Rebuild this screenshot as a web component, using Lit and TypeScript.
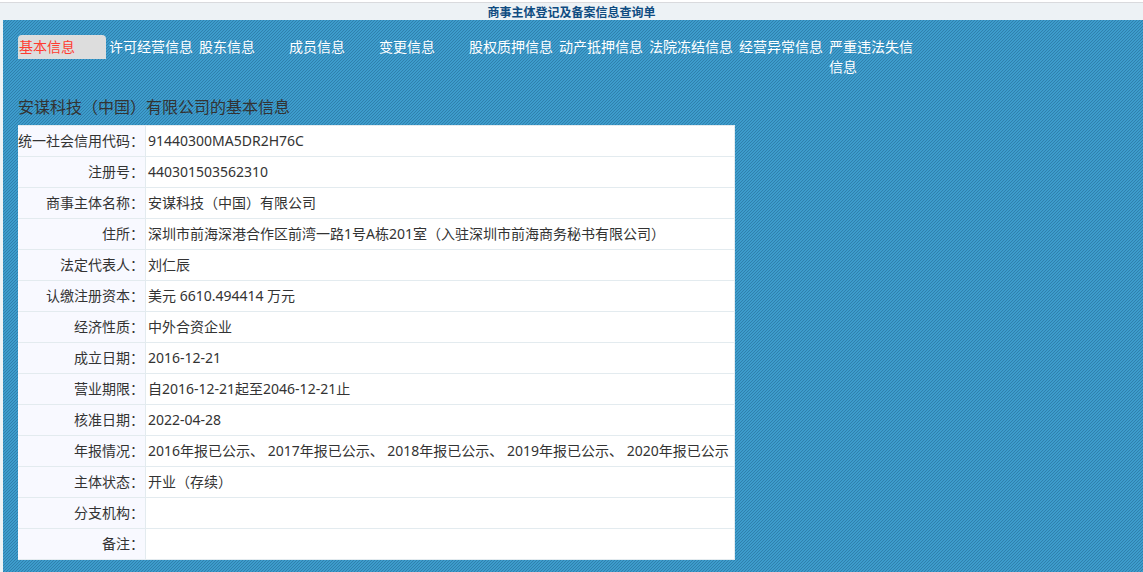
import { LitElement, html, css } from "lit";
import { customElement, property, state } from "lit/decorators.js";

const TABS = [
  "基本信息",
  "许可经营信息",
  "股东信息",
  "成员信息",
  "变更信息",
  "股权质押信息",
  "动产抵押信息",
  "法院冻结信息",
  "经营异常信息",
  "严重违法失信信息",
];

const ROWS: [string, string][] = [
  ["统一社会信用代码", "91440300MA5DR2H76C"],
  ["注册号", "440301503562310"],
  ["商事主体名称", "安谋科技（中国）有限公司"],
  ["住所", "深圳市前海深港合作区前湾一路1号A栋201室（入驻深圳市前海商务秘书有限公司）"],
  ["法定代表人", "刘仁辰"],
  ["认缴注册资本", "美元 6610.494414 万元"],
  ["经济性质", "中外合资企业"],
  ["成立日期", "2016-12-21"],
  ["营业期限", "自2016-12-21起至2046-12-21止"],
  ["核准日期", "2022-04-28"],
  ["年报情况", "2016年报已公示、 2017年报已公示、 2018年报已公示、 2019年报已公示、 2020年报已公示"],
  ["主体状态", "开业（存续）"],
  ["分支机构", ""],
  ["备注", ""],
];

@customElement("info-table")
export class InfoTable extends LitElement {
  @property({ attribute: false }) rows: [string, string][] = [];

  static styles = css`
    :host {
      display: block;
    }
    .table {
      width: 717px;
      border-collapse: separate;
      border-spacing: 0;
      border-top: 1px solid #e3ebef;
      background: #fff;
      color: #333;
      font-size: 14px;
      line-height: 30px;
    }
    .label,
    .value {
      padding: 0;
      border: solid #e3ebef;
      border-width: 0 1px 1px 0;
      height: 30px;
      font-weight: 400;
      white-space: nowrap;
    }
    .label {
      width: 126px;
      padding-right: 1px;
      text-align: right;
      background: #f8f9ff;
    }
    .value {
      padding-left: 2px;
      text-align: left;
    }
  `;

  render() {
    return html`
      <table class="table">
        <tbody>
          ${this.rows.map(
            ([label, value]) => html`<tr>
              <th class="label" scope="row">${label}：</th>
              <td class="value">${value}</td>
            </tr>`
          )}
        </tbody>
      </table>
    `;
  }
}

@customElement("app-root")
export class AppRoot extends LitElement {
  @state() private active = 0;

  static styles = css`
    :host {
      display: flex;
      flex-direction: column;
      min-height: 100vh;
      box-sizing: border-box;
      padding: 2px 0 0 3px;
      background: linear-gradient(#fff 2px, #edf2f5 2px);
      font-family: "Noto Sans", "Noto Sans CJK SC", sans-serif;
    }
    .header {
      margin-left: -3px;
      border-top: 1px solid #d9dadd;
      background: #edf2f5;
    }
    .title {
      margin: 0;
      padding-top: 3px;
      font-size: 12px;
      line-height: 14px;
      font-weight: 700;
      text-align: center;
      color: #0f4c81;
    }
    .main {
      flex: 1;
      padding: 15px 15px 12px;
      background: #3d9ccc
        url("data:image/svg+xml,%3Csvg xmlns='http://www.w3.org/2000/svg' width='3' height='3' shape-rendering='crispEdges'%3E%3Cpath fill='%232f80ad' d='M2 0h1v1H2zM1 1h1v1H1zM0 2h1v1H0z'/%3E%3C/svg%3E");
    }
    .tabs {
      display: flex;
      flex-wrap: wrap;
      align-items: flex-start;
      gap: 2px;
    }
    .tab {
      width: 88px;
      box-sizing: border-box;
      padding: 2px 1px;
      border: 0;
      border-radius: 4px 4px 0 0;
      background: none;
      color: #fff;
      font: inherit;
      font-size: 14px;
      line-height: 20px;
      text-align: left;
      cursor: pointer;
    }
    .tab[aria-selected="true"] {
      background: #ddd;
      color: #ff3b30;
    }
    .heading {
      margin: 18px 0 8px;
      font-size: 16px;
      line-height: 20px;
      font-weight: 400;
      color: #333;
    }
  `;

  render() {
    return html`
      <header class="header">
        <h1 class="title">商事主体登记及备案信息查询单</h1>
      </header>
      <main class="main">
        <nav class="tabs" role="tablist">
          ${TABS.map(
            (name, i) => html`<button
              class="tab"
              type="button"
              role="tab"
              aria-selected=${i === this.active ? "true" : "false"}
              @click=${() => (this.active = i)}
            >${name}</button>`
          )}
        </nav>
        <h2 class="heading">安谋科技（中国）有限公司的基本信息</h2>
        <info-table .rows=${ROWS}></info-table>
      </main>
    `;
  }
}
